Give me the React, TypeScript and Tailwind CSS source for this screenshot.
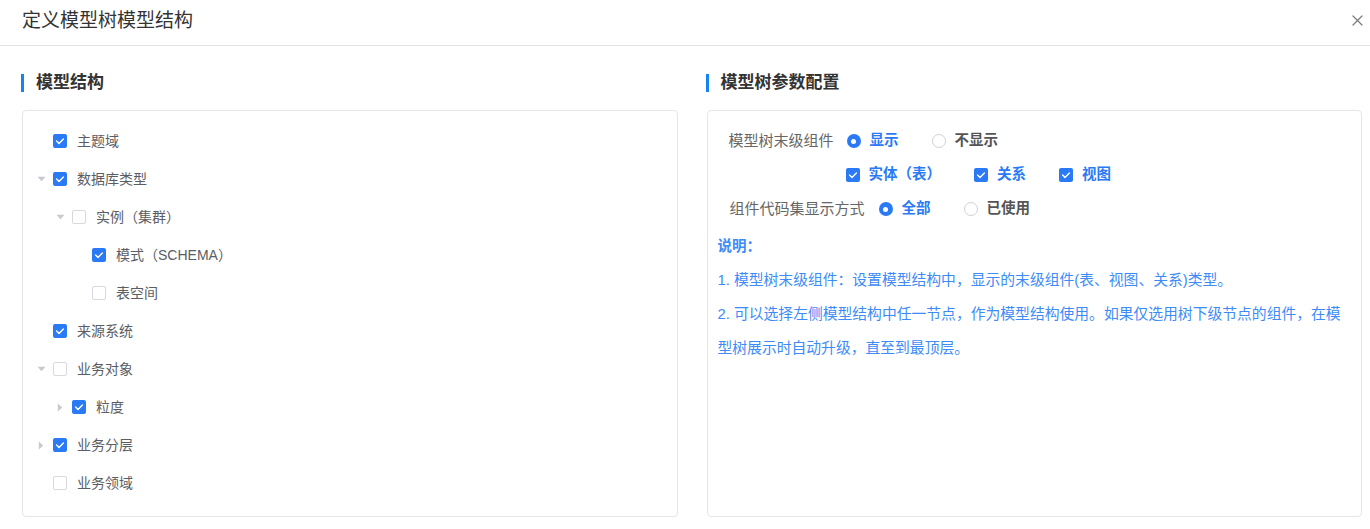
import { ReactNode } from "react";

type TreeNode = {
  label: string;
  level: number;
  checked: boolean;
  caret?: "down" | "right";
};

const treeNodes: TreeNode[] = [
  { label: "主题域", level: 0, checked: true },
  { label: "数据库类型", level: 0, checked: true, caret: "down" },
  { label: "实例（集群）", level: 1, checked: false, caret: "down" },
  { label: "模式（SCHEMA）", level: 2, checked: true },
  { label: "表空间", level: 2, checked: false },
  { label: "来源系统", level: 0, checked: true },
  { label: "业务对象", level: 0, checked: false, caret: "down" },
  { label: "粒度", level: 1, checked: true, caret: "right" },
  { label: "业务分层", level: 0, checked: true, caret: "right" },
  { label: "业务领域", level: 0, checked: false },
];

const indent = ["pl-0", "pl-[19px]", "pl-[39px]"];

function Checkbox({ checked }: { checked: boolean }) {
  if (!checked) {
    return (
      <span className="block w-[14px] h-[14px] rounded-[2px] border border-[#d6d9df] bg-white shrink-0" />
    );
  }
  return (
    <span className="flex items-center justify-center w-[14px] h-[14px] rounded-[2px] bg-[#2a7af5] shrink-0">
      <svg width="14" height="14" viewBox="0 0 14 14">
        <path
          d="M3.6 7.1 L6 9.4 L10.4 4.9"
          fill="none"
          stroke="#fff"
          strokeWidth="1.4"
          strokeLinecap="round"
          strokeLinejoin="round"
        />
      </svg>
    </span>
  );
}

function Radio({ checked }: { checked: boolean }) {
  if (!checked) {
    return (
      <span className="block w-[14px] h-[14px] rounded-full border border-[#cfd2d8] bg-white shrink-0" />
    );
  }
  return (
    <span className="flex items-center justify-center w-[14px] h-[14px] rounded-full bg-[#2a7af5] shrink-0">
      <span className="block w-[5px] h-[5px] rounded-full bg-white" />
    </span>
  );
}

function Caret({ dir }: { dir?: "down" | "right" }) {
  if (!dir) return null;
  if (dir === "down") {
    return (
      <svg width="9" height="6" viewBox="0 0 9 6">
        <path d="M0.5 0.8 L8.5 0.8 L4.5 5.2 Z" fill="#c6c9cf" />
      </svg>
    );
  }
  return (
    <svg width="6" height="9" viewBox="0 0 6 9">
      <path d="M0.8 0.5 L0.8 8.5 L5.2 4.5 Z" fill="#c6c9cf" />
    </svg>
  );
}

function SectionTitle({ children }: { children: ReactNode }) {
  return (
    <div className="flex items-center h-[20px]">
      <span className="block w-[3px] h-[18px] bg-[#1683f4]" />
      <span className="ml-[12px] text-[17px] font-bold text-[#333] leading-[20px]">
        {children}
      </span>
    </div>
  );
}

function RadioOption({ label, checked }: { label: string; checked: boolean }) {
  return (
    <div className="flex items-center mr-[33px]">
      <Radio checked={checked} />
      <span
        className={
          checked
            ? "ml-[9px] text-[14.5px] font-bold text-[#2a7af5]"
            : "ml-[9px] text-[14.5px] font-bold text-[#555]"
        }
      >
        {label}
      </span>
    </div>
  );
}

function CheckOption({ label }: { label: string }) {
  return (
    <div className="flex items-center mr-[33px]">
      <Checkbox checked />
      <span className="ml-[9px] text-[14.5px] font-bold text-[#2a7af5]">
        {label}
      </span>
    </div>
  );
}

export default function App() {
  return (
    <div className="w-full h-[529px] bg-white font-['Liberation_Sans','Noto_Sans_CJK_SC',sans-serif] overflow-hidden">
      <header className="flex items-center justify-between h-[46px] border-b border-[#e3e3e3] pl-[22px] pr-[7px]">
        <h1 className="text-[19px] text-[#333] leading-[24px] -mt-[3px]">
          定义模型树模型结构
        </h1>
        <svg width="11" height="11" viewBox="0 0 11 11" className="-mt-[5px]">
          <path
            d="M1 1 L10 10 M10 1 L1 10"
            stroke="#7d7d7d"
            strokeWidth="1.3"
            strokeLinecap="round"
          />
        </svg>
      </header>

      <div className="grid grid-cols-2 gap-[28px] pl-[21px] pr-[8px] pt-[27px]">
        <section className="flex flex-col">
          <SectionTitle>模型结构</SectionTitle>
          <div className="mt-[17px] ml-[1px] h-[407px] rounded-[4px] border border-[#e6e6e6] pt-[11px] pl-[9px]">
            {treeNodes.map((node, i) => (
              <div
                key={i}
                className={`flex items-center h-[38px] ${indent[node.level]}`}
              >
                <span className="flex items-center justify-center w-[18px] h-full">
                  <Caret dir={node.caret} />
                </span>
                <span className="ml-[3px]">
                  <Checkbox checked={node.checked} />
                </span>
                <span className="ml-[10px] text-[14px] text-[#5a5d63] leading-[20px]">
                  {node.label}
                </span>
              </div>
            ))}
          </div>
        </section>

        <section className="flex flex-col">
          <SectionTitle>模型树参数配置</SectionTitle>
          <div className="mt-[17px] ml-[1px] h-[407px] rounded-[4px] border border-[#e6e6e6] pt-[13px] pl-[10px] pr-[6px]">
            <div className="flex items-center h-[34px] pl-[11px]">
              <span className="text-[15px] text-[#666] mr-[13px]">
                模型树末级组件
              </span>
              <RadioOption label="显示" checked />
              <RadioOption label="不显示" checked={false} />
            </div>
            <div className="flex items-center h-[34px] pl-[128px]">
              <CheckOption label="实体（表）" />
              <CheckOption label="关系" />
              <CheckOption label="视图" />
            </div>
            <div className="flex items-center h-[34px] pl-[12px]">
              <span className="text-[15px] text-[#666] mr-[14px]">
                组件代码集显示方式
              </span>
              <RadioOption label="全部" checked />
              <RadioOption label="已使用" checked={false} />
            </div>
            <div className="mt-[3px] text-[14.8px] leading-[34px] text-[#3d8bf7]">
              <div className="font-bold text-[14.5px]">说明：</div>
              <p>1. 模型树末级组件：设置模型结构中，显示的末级组件(表、视图、关系)类型。</p>
              <p>
                2.
                可以选择左侧模型结构中任一节点，作为模型结构使用。如果仅选用树下级节点的组件，在模型树展示时自动升级，直至到最顶层。
              </p>
            </div>
          </div>
        </section>
      </div>
    </div>
  );
}
